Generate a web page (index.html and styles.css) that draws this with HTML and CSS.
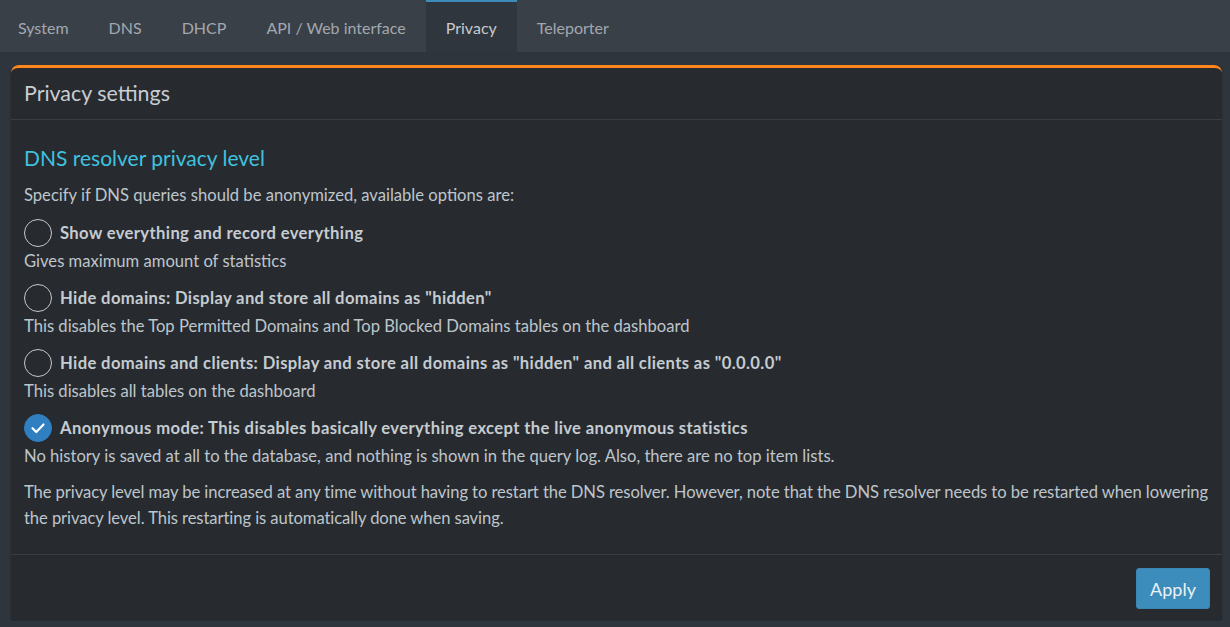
FILE: index.html
```html
<!DOCTYPE html>
<html>
<head>
<meta charset="utf-8">
<link rel="stylesheet" href="styles.css">
</head>
<body>
<nav class="tabs">
  <a class="tab">System</a>
  <a class="tab">DNS</a>
  <a class="tab">DHCP</a>
  <a class="tab">API / Web interface</a>
  <a class="tab active">Privacy</a>
  <a class="tab">Teleporter</a>
</nav>
<main class="content">
  <section class="card">
    <header class="card-header">Privacy settings</header>
    <div class="card-body">
      <h4 class="section-title">DNS resolver privacy level</h4>
      <p class="text">Specify if DNS queries should be anonymized, available options are:</p>
      <div class="option first">
        <label class="radio-row"><span class="radio"></span><span class="label">Show everything and record everything</span></label>
        <p class="text">Gives maximum amount of statistics</p>
      </div>
      <div class="option">
        <label class="radio-row"><span class="radio"></span><span class="label">Hide domains: Display and store all domains as "hidden"</span></label>
        <p class="text">This disables the Top Permitted Domains and Top Blocked Domains tables on the dashboard</p>
      </div>
      <div class="option">
        <label class="radio-row"><span class="radio"></span><span class="label">Hide domains and clients: Display and store all domains as "hidden" and all clients as "0.0.0.0"</span></label>
        <p class="text">This disables all tables on the dashboard</p>
      </div>
      <div class="option">
        <label class="radio-row"><span class="radio checked"><svg viewBox="0 0 28 28" width="28" height="28"><path d="M8.5 14.2 L12.3 18 L19.5 10.5" fill="none" stroke="#ffffff" stroke-width="2.2" stroke-linecap="round" stroke-linejoin="round"/></svg></span><span class="label">Anonymous mode: This disables basically everything except the live anonymous statistics</span></label>
        <p class="text">No history is saved at all to the database, and nothing is shown in the query log. Also, there are no top item lists.</p>
      </div>
      <p class="text note">The privacy level may be increased at any time without having to restart the DNS resolver. However, note that the DNS resolver needs to be restarted when lowering the privacy level. This restarting is automatically done when saving.</p>
    </div>
    <footer class="card-footer">
      <button class="btn-apply">Apply</button>
    </footer>
  </section>
</main>
</body>
</html>
```

FILE: styles.css
```css
* { box-sizing: border-box; }
html, body {
  margin: 0;
  padding: 0;
  background: #2f353c;
  font-family: "Lato", "Liberation Sans", sans-serif;
  font-size: 16.6px;
  color: #bec5cb;
}
.tabs {
  display: flex;
  height: 52px;
  background: #3a4048;
  padding-left: 0;
  margin-left: -2px;
}
.tab {
  display: flex;
  align-items: center;
  padding: 0 20px;
  color: #a2a8ae;
  font-size: 16px;
  border-top: 2px solid transparent;
  cursor: pointer;
}
.tab.active {
  background: #30363d;
  border-top-color: #3c8dbc;
  color: #c6cbd0;
}
.content {
  padding: 13px 8px 0 11px;
}
.card {
  background: #272b30;
  border-top: 3px solid #fd861d;
  border-radius: 8px 8px 5px 5px;
  box-shadow: 0 1px 2px rgba(0,0,0,0.35);
}
.card-header {
  height: 52px;
  display: flex;
  align-items: center;
  padding: 0 13px 2px;
  font-size: 21.4px;
  color: #c8cdd2;
  border-bottom: 1px solid #393e44;
}
.card-body {
  padding: 25px 2px 23px 13px;
}
.section-title {
  margin: 0 0 12px 0;
  font-size: 21px;
  line-height: 25px;
  font-weight: 400;
  color: #3fc1df;
}
.text {
  margin: 0;
  line-height: 26px;
}
.option {
  margin-top: 10px;
}
.option.first {
  margin-top: 11px;
}
.radio-row {
  display: flex;
  align-items: center;
  gap: 8px;
  height: 28px;
  margin-bottom: 1px;
}
.radio {
  width: 28px;
  height: 28px;
  border-radius: 50%;
  border: 1.5px solid #c4c9ce;
  flex: none;
  display: flex;
  align-items: center;
  justify-content: center;
}
.radio.checked {
  background: #2f7fc1;
  border-color: #2f7fc1;
}
.radio.checked svg { display: block; margin: -1.5px; }
.label {
  font-weight: 700;
  letter-spacing: 0.38px;
  color: #c6cbd0;
}
.note {
  margin-top: 10px;
  letter-spacing: -0.08px;
}
.card-footer {
  border-top: 1px solid #393e44;
  display: flex;
  justify-content: flex-end;
  padding: 13px 12px 12px;
}
.btn-apply {
  width: 74px;
  height: 41px;
  background: #3c8dbc;
  border: 1px solid #3a87b4;
  border-radius: 3px;
  color: #eaf1f5;
  font-family: inherit;
  font-size: 18px;
  padding: 0;
}
```
